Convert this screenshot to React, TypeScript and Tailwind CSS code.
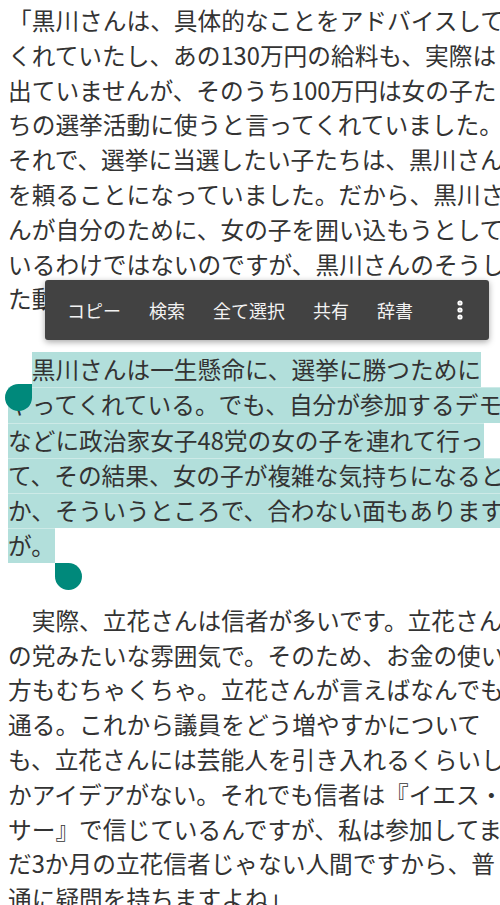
import { MoreVertical } from 'lucide-react';

const PARA_1 = [
  '「黒川さんは、具体的なことをアドバイスして',
  'くれていたし、あの130万円の給料も、実際は',
  '出ていませんが、そのうち100万円は女の子た',
  'ちの選挙活動に使うと言ってくれていました。',
  'それで、選挙に当選したい子たちは、黒川さん',
  'を頼ることになっていました。だから、黒川さ',
  'んが自分のために、女の子を囲い込もうとして',
  'いるわけではないのですが、黒川さんのそうし',
  'た動きには',
];

// selected paragraph: [unselected prefix, selected text]
const PARA_2: [string, string][] = [
  ['　', '黒川さんは一生懸命に、選挙に勝つために'],
  ['', 'やってくれている。でも、自分が参加するデモ'],
  ['', 'などに政治家女子48党の女の子を連れて行っ'],
  ['', 'て、その結果、女の子が複雑な気持ちになると'],
  ['', 'か、そういうところで、合わない面もあります'],
  ['', 'が。'],
];

const PARA_3 = [
  '　実際、立花さんは信者が多いです。立花さん',
  'の党みたいな雰囲気で。そのため、お金の使い',
  '方もむちゃくちゃ。立花さんが言えばなんでも',
  '通る。これから議員をどう増やすかについて',
  'も、立花さんには芸能人を引き入れるくらいし',
  'かアイデアがない。それでも信者は『イエス・',
  'サー』で信じているんですが、私は参加してま',
  'だ3か月の立花信者じゃない人間ですから、普',
  '通に疑問を持ちますよね」',
];

const ACTIONS = ['コピー', '検索', '全て選択', '共有', '辞書'];

export default function App() {
  return (
    <div
      className="relative w-[500px] h-[905px] overflow-hidden bg-white text-[#333333] text-[23.7px]"
      style={{ fontFamily: '"Noto Sans CJK JP", "Noto Sans", sans-serif' }}
    >
      <div className="px-[8px] pt-[3px]">
        <div className="leading-[34.8px]">
          {PARA_1.map(l => (
            <div key={l} className="whitespace-nowrap">{l}</div>
          ))}
        </div>

        <div className="mt-[36px] leading-[35.2px]">
          {PARA_2.map(([pre, sel], i) => (
            <div key={sel} className="h-[35.2px] whitespace-nowrap">
              {pre}
              <span
                className={`inline-block h-[35.2px] bg-[#b2dfdb] ${i > 0 ? 'border-t border-[#cdeae7] leading-[33.2px]' : ''}`}
              >
                {sel}
              </span>
            </div>
          ))}
        </div>

        <div className="mt-[39.5px] leading-[34.8px]">
          {PARA_3.map(l => (
            <div key={l} className="whitespace-nowrap">{l}</div>
          ))}
        </div>
      </div>

      {/* selection handles */}
      <div className="absolute left-[5px] top-[384px] w-[27px] h-[27px] rounded-full rounded-tr-none bg-[#00897b]" />
      <div className="absolute left-[55px] top-[563px] w-[27px] h-[27px] rounded-full rounded-tl-none bg-[#00897b]" />

      {/* text selection toolbar */}
      <div className="absolute left-[45px] top-[280px] w-[444px] h-[60px] flex items-center pl-[8px] bg-[#424242] rounded-[3px] shadow-[0_2px_6px_rgba(0,0,0,0.35)] text-[18px] text-[#f2f2f2]">
        {ACTIONS.map(a => (
          <div key={a} className="px-[14px] whitespace-nowrap leading-[60px]">{a}</div>
        ))}
        <div className="ml-auto w-[58px] h-full flex items-center justify-center">
          <MoreVertical className="w-[24px] h-[24px] text-white" strokeWidth={3.2} />
        </div>
      </div>
    </div>
  );
}
